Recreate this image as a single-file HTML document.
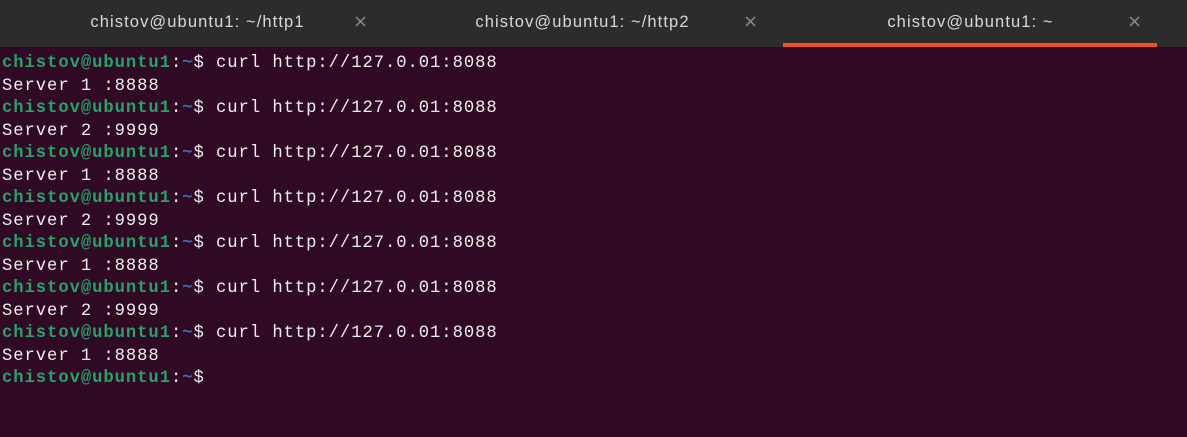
<!DOCTYPE html>
<html><head><style>
html,body{margin:0;padding:0;width:1187px;height:437px;overflow:hidden;background:#300a24}
.bar{position:absolute;left:0;top:0;width:1187px;height:47px;background:#2c2c2c}
.tab{position:absolute;top:0;height:47px;font:16.5px "Liberation Sans",sans-serif;letter-spacing:1.1px;color:#d8d8d8;line-height:45px;text-align:center}
.x{position:absolute;top:0;color:#8a8a8a;font:18px "DejaVu Sans",sans-serif;line-height:44px}
.ul{position:absolute;left:783px;top:43px;width:374px;height:4px;background:#e95420}
pre{position:absolute;left:2px;top:53px;margin:0;font:17.2px "Liberation Mono",monospace;letter-spacing:0.95px;line-height:22.5px;color:#eeeeec}
.g{color:#26a269;font-weight:bold}.b{color:#3a6fb0;font-weight:bold}
</style></head><body>
<div class="bar"></div>
<div class="tab" style="left:0;width:395px">chistov@ubuntu1: ~/http1</div>
<div class="x" style="left:353px">×</div>
<div class="tab" style="left:385px;width:395px">chistov@ubuntu1: ~/http2</div>
<div class="x" style="left:743px">×</div>
<div class="tab" style="left:773px;width:395px">chistov@ubuntu1: ~</div>
<div class="x" style="left:1127px">×</div>
<div class="ul"></div>
<pre><span class="g">chistov@ubuntu1</span>:<span class="b">~</span>$ curl http://127.0.01:8088
Server 1 :8888
<span class="g">chistov@ubuntu1</span>:<span class="b">~</span>$ curl http://127.0.01:8088
Server 2 :9999
<span class="g">chistov@ubuntu1</span>:<span class="b">~</span>$ curl http://127.0.01:8088
Server 1 :8888
<span class="g">chistov@ubuntu1</span>:<span class="b">~</span>$ curl http://127.0.01:8088
Server 2 :9999
<span class="g">chistov@ubuntu1</span>:<span class="b">~</span>$ curl http://127.0.01:8088
Server 1 :8888
<span class="g">chistov@ubuntu1</span>:<span class="b">~</span>$ curl http://127.0.01:8088
Server 2 :9999
<span class="g">chistov@ubuntu1</span>:<span class="b">~</span>$ curl http://127.0.01:8088
Server 1 :8888
<span class="g">chistov@ubuntu1</span>:<span class="b">~</span>$</pre>
</body></html>
